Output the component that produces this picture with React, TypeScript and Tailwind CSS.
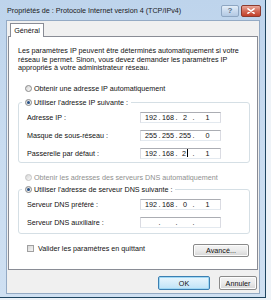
import React from "react";

const Radio = ({ checked = false, disabled = false }: { checked?: boolean; disabled?: boolean }) => (
  <span
    className={
      "flex w-[7px] h-[7px] shrink-0 items-center justify-center rounded-full border bg-gradient-to-br from-[#d4d4d4] to-[#fbfbfb] " +
      (disabled ? "border-[#c4c4c4]" : "border-[#8a8a8a]")
    }
  >
    {checked && <span className="block w-[3px] h-[3px] rounded-full bg-[#244f86]" />}
  </span>
);

const IpField = ({ octets, cursorAfter }: { octets: string[]; cursorAfter?: number }) => (
  <div className="flex w-[81px] h-[11px] items-center border border-[#abadb3] border-l-[#dadbe2] border-r-[#dadbe2] border-b-[#e3e9ef] bg-white pl-[3px] text-[7.2px] leading-[9px] text-[#111]">
    {octets.map((o, i) => (
      <React.Fragment key={i}>
        <span className={"flex items-center justify-center " + (i === 3 ? "flex-1" : "w-[14px]")}>
          {o}
          {cursorAfter === i && <span className="ml-[1px] inline-block w-[1px] h-[8px] bg-black" />}
        </span>
        {i < 3 && <span className="w-[3px] text-center">.</span>}
      </React.Fragment>
    ))}
  </div>
);

const Row = ({ label, children, first = false }: { label: string; children: React.ReactNode; first?: boolean }) => (
  <div className={"flex h-[11px] items-center ml-[5px] " + (first ? "mt-[5px]" : "mt-[7px]")}>
    <span className="w-[113px] text-[7.2px] leading-[9px] text-[#111]">{label}</span>
    {children}
  </div>
);

const WinButton = ({ label, className = "", focused = false }: { label: string; className?: string; focused?: boolean }) => (
  <div
    className={
      "flex items-center justify-center rounded-[2px] border text-[7.2px] leading-[9px] text-[#111] " +
      (focused
        ? "border-[#3c7fb1] bg-gradient-to-b from-[#eaf6fd] to-[#bfe3f7] shadow-[inset_0_0_0_1px_#9fd8f5] "
        : "border-[#8a8a8a] bg-gradient-to-b from-[#f4f4f4] via-[#ebebeb] to-[#d6d6d6] shadow-[inset_0_0_0_1px_#fcfcfc] ") +
      className
    }
  >
    {label}
  </div>
);

export default function App() {
  return (
    <div className="relative w-[271px] h-[300px] overflow-hidden bg-[#eef3f8] font-['Liberation_Sans',Arial,sans-serif]">
      <div className="flex flex-col w-[266px] h-[298px] border-r border-b border-[#1f4560] bg-gradient-to-b from-[#bed4ec] via-[#c9dcf0] to-[#cfe0f2]">
        {/* Title bar */}
        <div className="flex h-[20px] shrink-0 items-start">
          <span className="ml-[7px] mt-[6px] flex-1 whitespace-nowrap text-[7.2px] leading-[9px] text-[#1b1b1b]">
            Propriétés de : Protocole Internet version 4 (TCP/IPv4)
          </span>
          <div className="mt-[5px] mr-[4px] flex gap-[2px]">
            <div className="flex w-[18px] h-[12px] items-center justify-center rounded-[2px] border border-[#8ea6c2] bg-gradient-to-b from-[#e4eef8] via-[#c9daee] to-[#b3c9e3] text-[8px] font-bold leading-[8px] text-[#5a6f88]">
              ?
            </div>
            <div className="flex w-[20px] h-[12px] items-center justify-center rounded-[2px] border border-[#8c3b2f] bg-gradient-to-b from-[#e9a89b] via-[#d26a58] to-[#c2402a]">
              <svg width="8" height="6" viewBox="0 0 8 6">
                <path d="M1 0.8 L7 5.2 M7 0.8 L1 5.2" stroke="#ffffff" strokeWidth="1.6" strokeLinecap="round" />
              </svg>
            </div>
          </div>
        </div>

        {/* Client area */}
        <div className="ml-[6px] mr-[5px] mb-[3px] flex flex-1 flex-col border border-[#94aac4] bg-[#f0f0f0] px-[1px]">
          {/* Tab */}
          <div className="relative z-10 ml-[2px] mt-[2px] -mb-[1px] flex w-[34px] h-[14px] items-center justify-center border border-b-0 border-[#898c95] bg-white text-[7.2px] leading-[9px] text-[#111]">
            Général
          </div>
          {/* Panel */}
          <div className="flex h-[234px] flex-col border border-[#898c95] bg-white">
            <p className="ml-[9px] mt-[10px] whitespace-nowrap text-[7.2px] leading-[8.5px] text-[#111]">
              Les paramètres IP peuvent être déterminés automatiquement si votre
              <br />
              réseau le permet. Sinon, vous devez demander les paramètres IP
              <br />
              appropriés à votre administrateur réseau.
            </p>

            <div className="ml-[16px] mt-[11px] flex h-[9px] items-center gap-[2px]">
              <Radio />
              <span className="text-[7.2px] leading-[9px] text-[#111]">Obtenir une adresse IP automatiquement</span>
            </div>

            <fieldset className="ml-[9px] mr-[7px] mt-[5px] rounded-[3px] border border-[#d5dfe5] px-[3px] pb-[3px]">
              <legend className="px-[3px]">
                <span className="flex h-[9px] items-center gap-[2px]">
                  <Radio checked />
                  <span className="text-[7.2px] leading-[9px] text-[#111]">Utiliser l'adresse IP suivante :</span>
                </span>
              </legend>
              <Row label="Adresse IP :" first>
                <IpField octets={["192", "168", "2", "1"]} />
              </Row>
              <Row label="Masque de sous-réseau :">
                <IpField octets={["255", "255", "255", "0"]} />
              </Row>
              <Row label="Passerelle par défaut :">
                <IpField octets={["192", "168", "2", "1"]} cursorAfter={2} />
              </Row>
            </fieldset>

            <div className="ml-[16px] mt-[10px] flex h-[9px] items-center gap-[2px]">
              <Radio disabled />
              <span className="text-[7.2px] leading-[9px] text-[#8f8f8f]">Obtenir les adresses des serveurs DNS automatiquement</span>
            </div>

            <fieldset className="ml-[9px] mr-[7px] mt-[3px] rounded-[3px] border border-[#d5dfe5] px-[3px] pb-[5px]">
              <legend className="px-[3px]">
                <span className="flex h-[9px] items-center gap-[2px]">
                  <Radio checked />
                  <span className="text-[7.2px] leading-[9px] text-[#111]">Utiliser l'adresse de serveur DNS suivante :</span>
                </span>
              </legend>
              <Row label="Serveur DNS préféré :" first>
                <IpField octets={["192", "168", "0", "1"]} />
              </Row>
              <Row label="Serveur DNS auxiliaire :">
                <IpField octets={["", "", "", ""]} />
              </Row>
            </fieldset>

            <div className="mt-[10px] flex items-start justify-between">
              <div className="ml-[18px] flex h-[9px] items-center gap-[4px]">
                <span className="block w-[7px] h-[7px] border border-[#a0a0a0] bg-gradient-to-br from-[#d8d8d8] to-[#f6f6f6]" />
                <span className="text-[7.2px] leading-[9px] text-[#111]">Valider les paramètres en quittant</span>
              </div>
              <WinButton label="Avancé..." className="mr-[8px] w-[56px] h-[13px]" />
            </div>
          </div>

          {/* Dialog buttons */}
          <div className="mt-[6px] flex justify-end">
            <WinButton label="OK" focused className="w-[52px] h-[14px]" />
            <WinButton label="Annuler" className="ml-[9px] mr-[1px] w-[38px] h-[14px]" />
          </div>
        </div>
      </div>
    </div>
  );
}
